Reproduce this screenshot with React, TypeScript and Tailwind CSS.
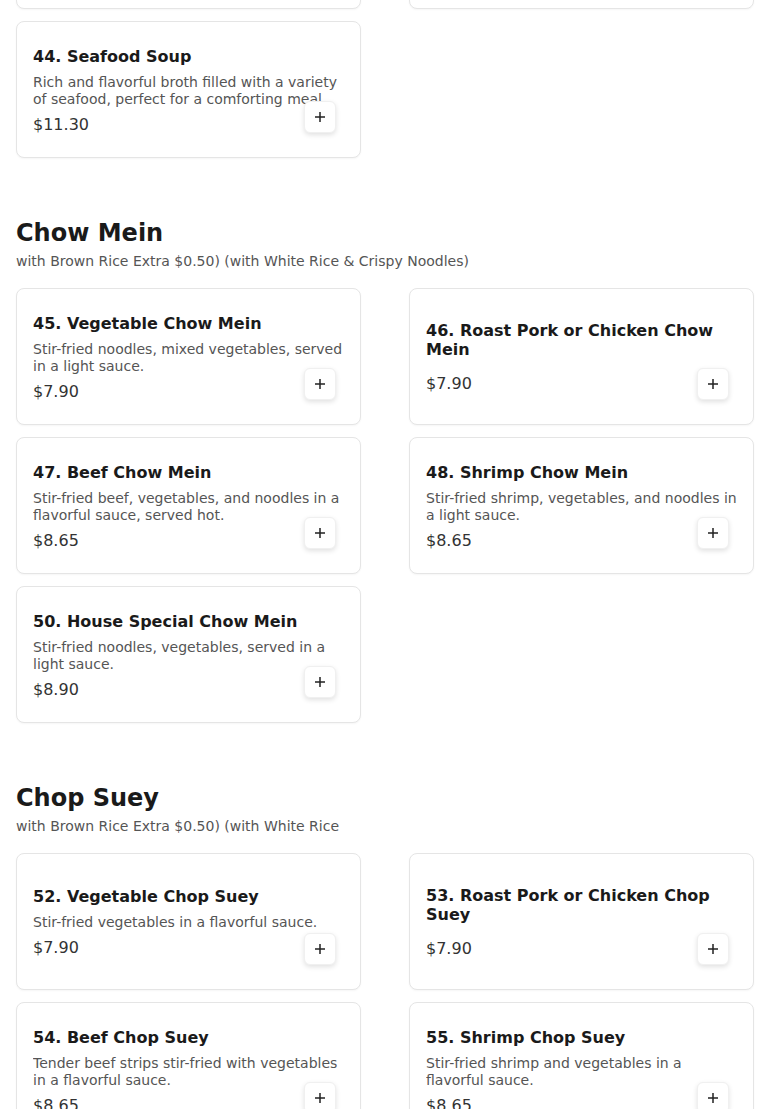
type Item = { no: number; name: string; desc?: string; price: string };

type Section = { title?: string; note?: string; items: Item[] };

const sections: Section[] = [
  {
    items: [
      { no: 42, name: "Hot and Sour Soup", desc: "Spicy and tangy soup with tofu, bamboo shoots and egg.", price: "$4.50" },
      { no: 43, name: "Wonton Soup", desc: "Clear broth with pork wontons and greens.", price: "$4.50" },
      {
        no: 44,
        name: "Seafood Soup",
        desc: "Rich and flavorful broth filled with a variety of seafood, perfect for a comforting meal.",
        price: "$11.30",
      },
    ],
  },
  {
    title: "Chow Mein",
    note: "with Brown Rice Extra $0.50) (with White Rice & Crispy Noodles)",
    items: [
      { no: 45, name: "Vegetable Chow Mein", desc: "Stir-fried noodles, mixed vegetables, served in a light sauce.", price: "$7.90" },
      { no: 46, name: "Roast Pork or Chicken Chow Mein", price: "$7.90" },
      { no: 47, name: "Beef Chow Mein", desc: "Stir-fried beef, vegetables, and noodles in a flavorful sauce, served hot.", price: "$8.65" },
      { no: 48, name: "Shrimp Chow Mein", desc: "Stir-fried shrimp, vegetables, and noodles in a light sauce.", price: "$8.65" },
      { no: 50, name: "House Special Chow Mein", desc: "Stir-fried noodles, vegetables, served in a light sauce.", price: "$8.90" },
    ],
  },
  {
    title: "Chop Suey",
    note: "with Brown Rice Extra $0.50) (with White Rice",
    items: [
      { no: 52, name: "Vegetable Chop Suey", desc: "Stir-fried vegetables in a flavorful sauce.", price: "$7.90" },
      { no: 53, name: "Roast Pork or Chicken Chop Suey", price: "$7.90" },
      { no: 54, name: "Beef Chop Suey", desc: "Tender beef strips stir-fried with vegetables in a flavorful sauce.", price: "$8.65" },
      { no: 55, name: "Shrimp Chop Suey", desc: "Stir-fried shrimp and vegetables in a flavorful sauce.", price: "$8.65" },
    ],
  },
];

function PlusIcon() {
  return (
    <svg width="10" height="10" viewBox="0 0 10 10" fill="none">
      <path d="M5 0v10M0 5h10" stroke="#222" strokeWidth="1.5" />
    </svg>
  );
}

function MenuCard({ item }: { item: Item }) {
  return (
    <div className="relative flex h-[137px] flex-col justify-center rounded-lg border border-[#e5e5e5] bg-white px-4 pt-1 shadow-[0_1px_2px_rgba(0,0,0,0.04)]">
      <h3 className="mb-2 pr-4 text-[16px] leading-[19px] font-bold text-[#1a1a1a]">
        {item.no}. {item.name}
      </h3>
      {item.desc && (
        <p className="max-h-[34px] overflow-hidden text-[14px] leading-[17px] text-[#555]">{item.desc}</p>
      )}
      <div className="mt-[5px] text-[16px] leading-6 text-[#333]">{item.price}</div>
      <button className="absolute right-[24px] bottom-[24px] flex h-8 w-8 items-center justify-center rounded-md border border-[#f0f0f0] bg-white shadow-[0_2px_5px_rgba(0,0,0,0.12)]">
        <PlusIcon />
      </button>
    </div>
  );
}

export default function App() {
  return (
    <div className="min-h-[1109px] overflow-hidden bg-white font-['DejaVu_Sans',sans-serif]">
      <div className="-mt-[128px] px-4">
        {sections.map((s, i) => (
          <section key={i} className={i > 0 ? "mt-[59px]" : ""}>
            {s.title && (
              <>
                <h2 className="text-[24px] leading-8 font-bold text-[#1a1a1a]">{s.title}</h2>
                <p className="mt-[2px] text-[14px] leading-5 text-[#555]">{s.note}</p>
              </>
            )}
            <div className={"grid grid-cols-2 gap-x-12 gap-y-3" + (s.title ? " mt-[17px]" : "")}>
              {s.items.map((it) => (
                <MenuCard key={it.no} item={it} />
              ))}
            </div>
          </section>
        ))}
      </div>
    </div>
  );
}
